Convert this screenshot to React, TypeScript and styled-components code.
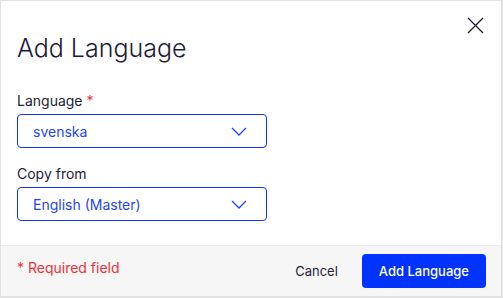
import React from "react"
import styled, { createGlobalStyle } from 'styled-components'

const GlobalStyle = createGlobalStyle`
    html, body {
        margin: 0;
        padding: 0;
        background: #e2e2e2;
        font-family: Inter, "Noto Sans", sans-serif;
    }
`

const Page = styled.div`
    padding: 1px 2px 2px 1px;
    width: 500px;
    height: 295px;
`

const Dialog = styled.div`
    width: 500px;
    height: 295px;
    background: #fff;
    display: flex;
    flex-direction: column;
    box-sizing: border-box;
`

const Body = styled.div`
    flex: 1;
    padding: 28px 16px 0 16px;
    display: flex;
    flex-direction: column;
`

const Header = styled.div`
    display: flex;
    justify-content: space-between;
    align-items: flex-start;
`

const Title = styled.h1`
    margin: 0;
    font-size: 25px;
    line-height: 38px;
    font-weight: 300;
    color: #1c1b3a;
`

const CloseButton = styled.button`
    border: none;
    background: none;
    padding: 0;
    margin: -14px 0 0 0;
    width: 20px;
    height: 20px;
    display: flex;
    align-items: center;
    justify-content: center;
    cursor: pointer;
`

const Form = styled.div`
    margin-top: 25px;
    display: flex;
    flex-direction: column;
    gap: 17px;
`

const Field = styled.div`
    display: flex;
    flex-direction: column;
    gap: 5px;
`

const Label = styled.label`
    font-size: 14px;
    line-height: 17px;
    color: #23223a;
`

const Star = styled.span`
    color: #f0303a;
`

const Select = styled.div`
    width: 250px;
    height: 34px;
    box-sizing: border-box;
    border: 1px solid #0a35ff;
    border-radius: 4px;
    display: flex;
    align-items: center;
    justify-content: space-between;
    padding: 0 19px 0 15px;
    font-size: 14px;
    color: #1f44ff;
    cursor: pointer;
`

const Footer = styled.div`
    height: 50px;
    background: #f6f6f6;
    border-top: 1px solid #ebebeb;
    display: flex;
    align-items: center;
    justify-content: space-between;
    padding: 0 15px 0 16px;
`

const Required = styled.span`
    font-size: 14px;
    color: #f0303a;
    margin-top: -8px;
`

const Actions = styled.div`
    display: flex;
    align-items: center;
    gap: 24px;
`

const CancelButton = styled.button`
    border: none;
    background: none;
    font-family: inherit;
    font-size: 13px;
    color: #23223a;
    padding: 0;
    cursor: pointer;
`

const PrimaryButton = styled.button`
    border: none;
    background: #0033ff;
    color: #fff;
    font-family: inherit;
    font-size: 13px;
    font-weight: 500;
    height: 34px;
    padding: 0 17px;
    border-radius: 4px;
    cursor: pointer;
`

const Chevron = () => (
    <svg width="16" height="9" viewBox="0 0 16 9" fill="none">
        <path d="M1 1l7 7 7-7" stroke="#1f44ff" strokeWidth="1.3" />
    </svg>
)

const CloseIcon = () => (
    <svg width="17" height="17" viewBox="0 0 17 17" fill="none">
        <path d="M1 1l15 15M16 1L1 16" stroke="#1c1b3a" strokeWidth="1.3" />
    </svg>
)

const App: React.FunctionComponent = () => {
    return (
        <Page>
            <GlobalStyle />
            <Dialog>
                <Body>
                    <Header>
                        <Title>Add Language</Title>
                        <CloseButton aria-label="Close"><CloseIcon /></CloseButton>
                    </Header>
                    <Form>
                        <Field>
                            <Label>Language <Star>*</Star></Label>
                            <Select>svenska<Chevron /></Select>
                        </Field>
                        <Field>
                            <Label>Copy from</Label>
                            <Select>English (Master)<Chevron /></Select>
                        </Field>
                    </Form>
                </Body>
                <Footer>
                    <Required>* Required field</Required>
                    <Actions>
                        <CancelButton>Cancel</CancelButton>
                        <PrimaryButton>Add Language</PrimaryButton>
                    </Actions>
                </Footer>
            </Dialog>
        </Page>
    )
}

export default App
